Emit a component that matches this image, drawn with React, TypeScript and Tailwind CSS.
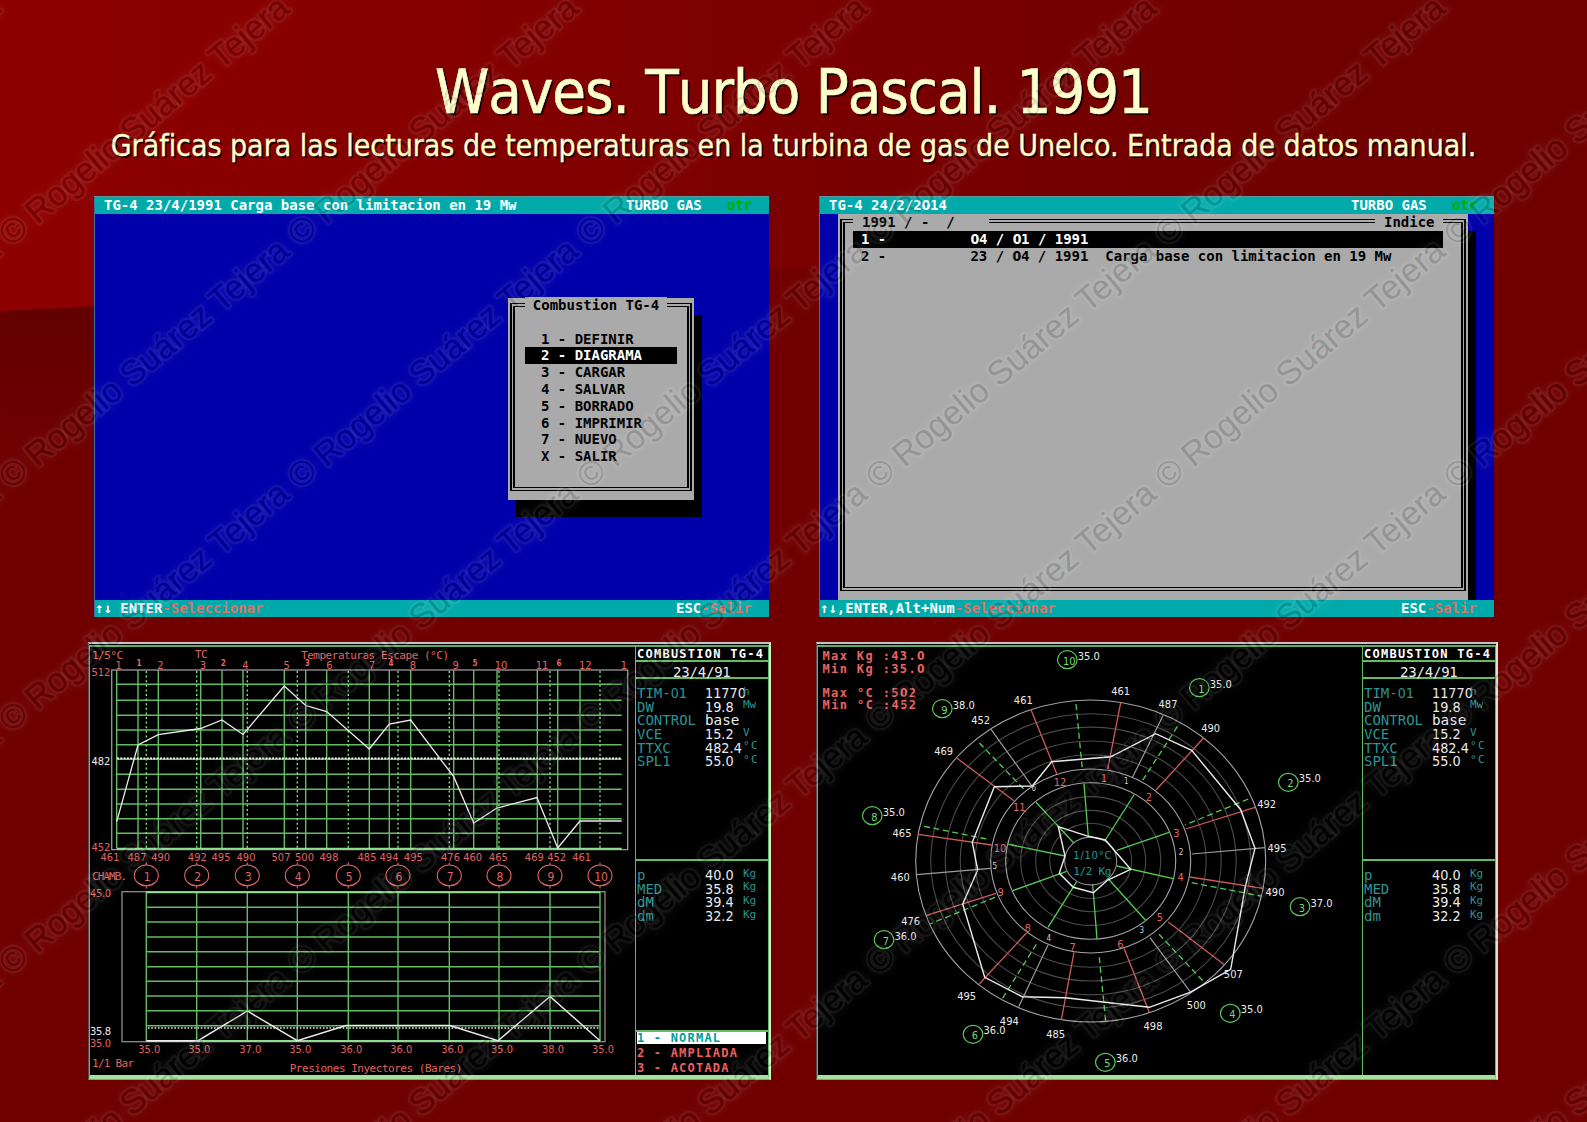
import React from "react";

const GREEN = "#62bd62";
const RED = "#e06464";
const WHITE = "#ececec";
const TEAL = "#2b9494";

/* Plain zeros: the monospace face has a marked zero, the condensed one has not. */
function Z({ t }: { t: string }) {
  return (
    <>
      {t.split(/(0)/).map((part, i) =>
        part === "0" ? (
          <span key={i} className="font-['DejaVu_Sans_Condensed'] tracking-[-0.02em]">
            0
          </span>
        ) : (
          part
        )
      )}
    </>
  );
}

/* ---------- text-mode screens (80 x 25 cells) ---------- */

function Bar({ children }: { children: React.ReactNode }) {
  return (
    <div className="flex h-[17px] shrink-0 whitespace-pre bg-[#00aaaa] leading-[17px] text-white">{children}</div>
  );
}

function TopBar({ title }: { title: string }) {
  return (
    <Bar>
      <span className="w-[531px] pl-[9px]">
        <Z t={title} />
      </span>
      <span className="w-[101px]">TURBO GAS</span>
      <span className="text-[#00aa00]">otr</span>
    </Bar>
  );
}

function BottomBar({ keys }: { keys: string }) {
  return (
    <Bar>
      <span className="w-[581px]">
        {keys}
        <span className="text-[#d87468]">-Seleccionar</span>
      </span>
      <span>
        ESC<span className="text-[#d87468]">-Salir</span>
      </span>
    </Bar>
  );
}

function TextScreen({ children }: { children: React.ReactNode }) {
  return (
    <section className="flex h-[421px] w-[675px] flex-col border-t border-l border-t-[#5c9a9a] border-l-[#3f6fa8] bg-[#0000aa] font-['DejaVu_Sans_Mono'] text-[14px] font-bold tracking-[-0.01px]">
      {children}
    </section>
  );
}

const MENU = [
  "1 - DEFINIR",
  "2 - DIAGRAMA",
  "3 - CARGAR",
  "4 - SALVAR",
  "5 - BORRADO",
  "6 - IMPRIMIR",
  "7 - NUEVO",
  "X - SALIR",
];

function MenuScreen() {
  return (
    <TextScreen>
      <TopBar title="TG-4 23/4/1991 Carga base con limitacion en 19 Mw" />
      <div className="flex flex-1 items-start pt-[84px] pl-[413px]">
        <div className="h-[202px] w-[186px] bg-[#aaaaaa] px-[2px] pt-[5px] pb-[9px] text-black shadow-[8px_17px_0_0_#000]">
          <div className="flex h-full flex-col border-x-[5px] border-y-[4px] border-double border-black">
            <div className="mt-[-10px] mr-[10px] self-center bg-[#aaaaaa] px-[8px] leading-[17px] whitespace-pre">
              Combustion TG-4
            </div>
            <ul className="mt-[16.6px] flex flex-col pl-[10px]">
              {MENU.map((m, i) => (
                <li
                  key={m}
                  className={
                    "h-[16.8px] w-[152px] pl-[16px] leading-[16.8px] whitespace-pre " + (i === 1 ? "bg-black text-white" : "")
                  }
                >
                  {m}
                </li>
              ))}
            </ul>
          </div>
        </div>
      </div>
      <BottomBar keys="↑↓ ENTER" />
    </TextScreen>
  );
}

function IndexScreen() {
  return (
    <TextScreen>
      <TopBar title="TG-4 24/2/2014" />
      <div className="flex flex-1 pl-[18px] text-black">
        <div className="w-[630px] bg-[#aaaaaa] px-[2px] pt-[5px] pb-[9px]">
          <div className="flex h-full flex-col border-x-[5px] border-y-[4px] border-double border-black">
            <div className="mt-[-9px] flex justify-between pr-[18px] pl-[8px] leading-[17px] whitespace-pre">
              <span className="w-[136px] bg-[#aaaaaa] pl-[9px]">1991 / -  /</span>
              <span className="w-[68px] bg-[#aaaaaa] pl-[9px]">Indice</span>
            </div>
            <div className="ml-[8px] h-[17px] w-[590px] bg-black pl-[8px] leading-[17px] whitespace-pre text-white">
              <Z t="1 -          04 / 01 / 1991" />
            </div>
            <div className="ml-[8px] pl-[8px] leading-[17px] whitespace-pre">
              <Z t="2 -          23 / 04 / 1991  Carga base con limitacion en 19 Mw" />
            </div>
          </div>
        </div>
        <div className="mt-[17px] w-[8px] bg-black" />
      </div>
      <BottomBar keys="↑↓,ENTER,Alt+Num" />
    </TextScreen>
  );
}

/* ---------- graphics-mode screens ---------- */

type LabelProps = { x: number; y: number; t: string; c?: string; s?: number; a?: "start" | "middle"; w?: number; mono?: boolean; bold?: boolean };

function L({ x, y, t, c = RED, s = 11, a = "middle", w, mono, bold }: LabelProps) {
  return (
    <text
      x={x}
      y={y}
      fill={c}
      fontSize={s}
      textAnchor={a}
      textLength={w}
      fontWeight={bold ? 700 : 400}
      fontFamily={mono ? "DejaVu Sans Mono" : "DejaVu Sans Condensed"}
      style={{ whiteSpace: "pre" }}
    >
      {t}
    </text>
  );
}

const READINGS = [
  ["TIM-01", "11770", "h"],
  ["DW", "19.8", "Mw"],
  ["CONTROL", "base", ""],
  ["VCE", "15.2", "V"],
  ["TTXC", "482.4", "°C"],
  ["SPL1", "55.0", "°C"],
];
const PRESSURES = [
  ["p", "40.0", "Kg"],
  ["MED", "35.8", "Kg"],
  ["dM", "39.4", "Kg"],
  ["dm", "32.2", "Kg"],
];

function Rows({ data }: { data: string[][] }) {
  return (
    <>
      {data.map(([k, v, u]) => (
        <div key={k} className="flex h-[13.7px] items-start pl-px leading-[13.7px] whitespace-pre">
          <span className="w-[68px] font-['DejaVu_Sans_Mono'] text-[14px] text-[#2b9494]">
            <Z t={k} />
          </span>
          <span
            className={
              "w-[38px] text-[14.3px] text-[#ececec] " +
              (v === "base" ? "font-['DejaVu_Sans_Mono']" : "font-['DejaVu_Sans_Condensed']")
            }
          >
            {v}
          </span>
          <span
            className={
              "relative -top-[2.5px] font-['DejaVu_Sans_Mono'] text-[11px] text-[#2b9494] " +
              (u === "°C" ? "tracking-[1.5px]" : "")
            }
          >
            {u}
          </span>
        </div>
      ))}
    </>
  );
}

function Side({ menu }: { menu?: boolean }) {
  return (
    <aside className="flex w-[133px] flex-col border-l border-[#62bd62]">
      <div className="h-[15px] border-b-2 border-[#62bd62] pl-px font-['DejaVu_Sans_Mono'] text-[12px] leading-[14px] font-bold tracking-[1.25px] whitespace-pre text-white">
        COMBUSTION TG-4
      </div>
      <div className="h-[17px] border-b-2 border-[#62bd62] pl-[37px] font-['DejaVu_Sans_Mono'] text-[14px] leading-[20px] tracking-[-0.2px] text-[#ececec]">
        23/4/91
      </div>
      <div className="h-[182px] border-b-2 border-[#62bd62] pt-[8px]">
        <Rows data={READINGS} />
      </div>
      <div className="flex-1 pt-[8px]">
        <Rows data={PRESSURES} />
      </div>
      {menu && (
        <div className="border-t-2 border-[#62bd62] pl-px font-['DejaVu_Sans_Mono'] text-[12px] font-bold tracking-[1.2px] whitespace-pre text-[#f06060]">
          <div className="mr-[2px] h-[12px] bg-white leading-[12.5px] text-[#009c9c]">1 - NORMAL</div>
          <div className="mt-[2px] h-[14.5px] leading-[14.5px]">2 - AMPLIADA</div>
          <div className="h-[14.5px] leading-[14.5px]">3 - ACOTADA</div>
        </div>
      )}
    </aside>
  );
}

const GRID_Y = [684.3, 700.3, 715.3, 730, 744.7, 759.2, 774.3, 789.3, 804, 818.7, 833.3];
const TC_X = [116.7, 138, 158.3, 200.7, 222, 243, 284.3, 305.7, 326.7, 369.3, 389.3, 410.7, 453.7, 473.7, 497, 537.3, 557.7, 580];
const CH_X = [146.3, 196.7, 247.3, 297.3, 348.3, 398, 449.3, 499, 550, 600];
const TC_TOP: [number, string][] = [
  [118.7, "1"], [160.5, "2"], [203, "3"], [245.5, "4"], [286.7, "5"], [329.5, "6"], [372, "7"],
  [413, "8"], [455.7, "9"], [501, "10"], [542, "11"], [585.3, "12"], [624, "1"],
];
const TC_SMALL: [number, string][] = [[139, "1"], [223.3, "2"], [307.3, "3"], [391, "4"], [475, "5"], [559, "6"]];
const TEMPS: [number, string][] = [
  [110, "461"], [137, "487"], [160.7, "490"], [197.3, "492"], [221, "495"], [246, "490"], [281, "507"], [304.5, "500"],
  [329, "498"], [367, "485"], [389, "494"], [413.3, "495"], [450.5, "476"], [472.7, "460"], [498.3, "465"],
  [534.3, "469"], [556.7, "452"], [581.7, "461"],
];
const BARS: [number, string][] = [
  [149.3, "35.0"], [199.3, "35.0"], [250.3, "37.0"], [300.3, "35.0"], [351.3, "36.0"], [401.3, "36.0"], [452.3, "36.0"],
  [502, "35.0"], [553, "38.0"], [603, "35.0"],
];
const BAR_Y = [907.3, 922, 937, 951.7, 966.7, 981.3, 996, 1010.7, 1025.7];

function LineChart() {
  return (
    <svg className="block h-[428px] w-[545px] shrink-0" viewBox="90 647 545 428" fill="none">
      <g stroke={GREEN} strokeWidth="1.4">
        {GRID_Y.map((y) => (
          <path key={y} d={`M116.7 ${y}H621.7`} />
        ))}
        {TC_X.map((x) => (
          <path key={x} d={`M${x} 670V848`} />
        ))}
        {CH_X.map((x) => (
          <path key={x} d={`M${x} 671V848`} stroke="#7fe07f" strokeDasharray="2 2.6" />
        ))}
      </g>
      <rect x="111.7" y="670" width="516" height="179.6" stroke="#9a9a9a" strokeWidth="1.3" />
      <path d="M116.7 848.8H621.7" stroke="#90dd90" strokeWidth="2" />
      <path d="M117 758.4H621.7" stroke="#f4fff4" strokeWidth="1.8" strokeDasharray="2 1.3" />
      <path
        d="M116.7 821.7 138 745 158.3 734.7 200.7 728.5 222 720 243 734.5 284.3 686 305.7 705.5 326.7 711.5 369.3 749 389.3 724 410.7 720 453.7 776.7 473.7 823 497 808 537 797.5 557.7 848 580 821H621.7"
        stroke={WHITE}
        strokeWidth="1.3"
      />
      <L x={92} y={658.7} t="1/5°C" a="start" w={31} mono />
      <L x={195} y={658} t="TC" a="start" w={12.5} mono />
      <L x={301} y={659} t="Temperaturas Escape (°C)" a="start" w={148} mono />
      {TC_TOP.map(([x, t]) => (
        <L key={x} x={x} y={668.9} t={t} />
      ))}
      {TC_SMALL.map(([x, t]) => (
        <L key={x} x={x} y={666.4} t={t} s={8} bold />
      ))}
      <L x={91.5} y={675.9} t="512" a="start" />
      <L x={91.5} y={765} t="482" a="start" c={WHITE} />
      <L x={91.5} y={851.2} t="452" a="start" />
      {TEMPS.map(([x, t]) => (
        <L key={x} x={x} y={861.2} t={t} />
      ))}
      <L x={92} y={880} t="CHAMB." a="start" w={35} mono />
      {CH_X.map((x, i) => (
        <g key={x}>
          <ellipse cx={x} cy={875.4} rx="12" ry="10.4" stroke={RED} strokeWidth="1.1" />
          <path d={`M${x} 862.5V865M${x} 885.8V888.5`} stroke={RED} strokeWidth="1.1" />
          <L x={x + 1} y={880.8} t={String(i + 1)} s={12} />
        </g>
      ))}
      <L x={90} y={897} t="45.0" a="start" w={21} />
      <L x={90} y={1035.2} t="35.8" a="start" w={21} c={WHITE} />
      <L x={90} y={1047.4} t="35.0" a="start" w={21} />
      <rect x="122" y="891.7" width="483" height="150" stroke="#8c8c8c" strokeWidth="1.3" />
      <g stroke={GREEN} strokeWidth="1.4">
        {BAR_Y.map((y) => (
          <path key={y} d={`M146.3 ${y}H600`} />
        ))}
        {CH_X.map((x) => (
          <path key={x} d={`M${x} 892V1041`} />
        ))}
        <path d="M146.3 892.3H600M146.3 1041H600" stroke="#90dd90" strokeWidth="2" />
      </g>
      <path d="M148 1028H600" stroke={WHITE} strokeWidth="1.3" strokeDasharray="1.6 1.7" />
      <path
        d="M146.3 1040.7H198L247.3 1011 297.3 1040.7 346 1025.5H450L498 1040.7 550 996.5 600 1040.7"
        stroke={WHITE}
        strokeWidth="1.4"
      />
      {BARS.map(([x, t]) => (
        <L key={x} x={x} y={1053.4} t={t} />
      ))}
      <L x={92} y={1067.2} t="1/1 Bar" a="start" w={42} mono />
      <L x={289.7} y={1072} t="Presiones Inyectores (Bares)" a="start" w={172.6} mono />
    </svg>
  );
}

const RINGS: [number, string][] = [
  [160, "#4a4a4a"], [145.5, "#4a4a4a"], [130.5, "#4a4a4a"], [115.5, "#4a4a4a"], [70, "#4a4a4a"], [55, "#4a4a4a"],
  [41, "#4a4a4a"], [175, "#a4a4a4"], [100, "#a4a4a4"], [85, "#a4a4a4"], [26, "#8c8c8c"],
];
const OUTER: [number, number, string][] = [
  [1023.3, 703.5, "461"], [1120.7, 694.5, "461"], [1168, 707.5, "487"], [1210.7, 732, "490"], [1266.7, 807.5, "492"],
  [1277, 851.5, "495"], [1275, 895.7, "490"], [1233.3, 978.3, "507"], [1196.3, 1009, "500"], [1153, 1029.7, "498"],
  [1055.7, 1038, "485"], [1009.3, 1025, "494"], [966.7, 1000.3, "495"], [910.7, 925.3, "476"], [900.3, 881, "460"],
  [902, 836.7, "465"], [943.7, 754.7, "469"], [980.7, 724.3, "452"],
];
const HOURS: [number, number, string][] = [
  [1060, 785.5, "12"], [1104, 782, "1"], [1149, 800.7, "2"], [1176.3, 836.7, "3"], [1180.7, 881, "4"], [1160, 921.3, "5"],
  [1120.3, 947.7, "6"], [1072.7, 950.7, "7"], [1027.7, 932.3, "8"], [1000.7, 896, "9"], [1000, 851.7, "10"], [1019.3, 811, "11"],
];
const SMALL: [number, number, string][] = [
  [1126.3, 784, "1"], [1181, 855.3, "2"], [1141.7, 933.3, "3"], [1048.7, 940.7, "4"], [994.7, 869.3, "5"], [1033.7, 791.3, "6"],
];
const CHAMBERS: [number, number, string, string][] = [
  [1199.3, 687.7, "1", "35.0"], [1288.3, 782.3, "2", "35.0"], [1300, 906.7, "3", "37.0"], [1230.3, 1013.3, "4", "35.0"],
  [1105.3, 1062.3, "5", "36.0"], [973, 1034.3, "6", "36.0"], [884, 939.7, "7", "36.0"], [872.3, 815.7, "8", "35.0"],
  [942.3, 708.7, "9", "38.0"], [1067.3, 659.7, "10", "35.0"],
];
const LIMITS: [number, string][] = [
  [660.3, "Max Kg :43.0"], [672.5, "Min Kg :35.0"], [696.7, "Max °C :502"], [708.9, "Min °C :452"],
];

function RadarChart() {
  return (
    <svg className="block h-[428px] w-[543px] shrink-0" viewBox="819 647 543 428" fill="none">
      {RINGS.map(([r, c]) => (
        <ellipse key={r} cx="1090.7" cy="861" rx={r} ry={r * 0.92} stroke={c} strokeWidth="1.1" />
      ))}
      <path
        stroke="#d05a5a"
        strokeWidth="1.3"
        d="M1031 709.7 1056.7 773.7M1120.7 702.7 1107.7 769M957 758.3 1014 800.7M918.3 834.3 991.7 845M1203.3 738.3 1156 790M1255 807.3 1185.7 829M1190 877 1262.7 888.3M1168.3 922 1224.3 964.7M1124 948.3 1149.3 1012.3M1074 952.3 1061.3 1020M1026.7 932.7 979 984.3M996 893.3 926.7 915.3"
      />
      <path
        stroke="#9c9c9c"
        strokeWidth="1.2"
        d="M991 729.3 1032.3 786.7M1163.3 715 1132.3 777.7M1265 847.7 1191.7 854M1150 937.7 1190.7 992.3M1048 945 1018.7 1006.7M916.7 874.7 990.7 868.3"
      />
      <path
        stroke="#55cc55"
        strokeWidth="1.3"
        strokeDasharray="6 3.6"
        d="M1076 704 1082.3 769M1177.3 726.7 1141.7 781.7M1248.3 799 1185 825M1191.7 882.7 1260.7 896M1159 934.3 1204.3 982.3M1099.3 957.3 1105.7 1021.7M1036.3 944.3 1001.7 999.7M995 897.3 930 924M924 826.3 990 839.7M979.3 743 1025 790.3"
      />
      <path
        stroke="#55cc55"
        strokeWidth="1.3"
        d="M1084 784 1088.3 836.3M1134 795 1105.3 840M1169 832.3 1116.7 850.3M1173.3 878.7 1116.7 866M1146 920.7 1107.7 878.3M1097 939 1092.7 885M1048 927.3 1076.7 881.7M1012.7 890.7 1066.7 871.3M1007.3 844 1065 856M1036 802.3 1074 843.3"
      />
      <g stroke={WHITE} strokeWidth="1.4">
        <path d="M1111 756.7 1155.7 733.7 1191.7 750.3 1240.7 809.7 1255 848.3 1245.3 886.7 1230.7 969.3 1190 992.3 1149.3 1007.3 1065.3 997.7 1022.3 996.7 984.7 977.3 962.7 904 977.7 870 972.3 842.3 994.3 786.7 1032.3 786 1051.7 761.7Z" />
        <path d="M1058.3 826.7 1088.3 836.3 1105.3 840 1130.7 869.3 1107.7 880 1093.3 892.7 1073.3 887.3 1059.3 873.3 1065 856Z" />
      </g>
      {OUTER.map(([x, y, t]) => (
        <L key={t + x} x={x} y={y} t={t} c={WHITE} />
      ))}
      {HOURS.map(([x, y, t]) => (
        <L key={t} x={x} y={y} t={t} />
      ))}
      {SMALL.map(([x, y, t]) => (
        <L key={t} x={x} y={y} t={t} s={8} c="#cfcfcf" />
      ))}
      {CHAMBERS.map(([x, y, n, v]) => (
        <g key={n}>
          <ellipse cx={x} cy={y} rx="9.8" ry="9" stroke="#5cc45c" strokeWidth="1.2" />
          <L x={x + 2} y={y + 5} t={n} c="#6fdc6f" />
          <L x={x + 10.5} y={y - 0.2} t={v} c={WHITE} a="start" />
        </g>
      ))}
      <L x={1073.3} y={858.5} t="1/10°C" a="start" w={38} c={TEAL} />
      <L x={1073.3} y={874.5} t="1/2 Kg" a="start" w={38} c={TEAL} mono />
      {LIMITS.map(([y, t]) => (
        <text
          key={t}
          x="822.5"
          y={y}
          fill="#ea6262"
          fontSize="12"
          fontWeight="700"
          textLength={t.length * 8.5}
          fontFamily="DejaVu Sans Mono"
          style={{ whiteSpace: "pre" }}
        >
          {t.split(/(0)/).map((part, i) =>
            part === "0" ? (
              <tspan key={i} fontFamily="DejaVu Sans Condensed">
                0
              </tspan>
            ) : (
              part
            )
          )}
        </text>
      ))}
    </svg>
  );
}

function GraphPanel({ children }: { children: React.ReactNode }) {
  return (
    <section className="h-[438px] border-t-2 border-r-2 border-b border-l border-t-[#c4c4c4] border-r-[#d6ead0] border-b-[#8f9a8c] border-l-[#5a4a4a] bg-black pt-px">
      <div className="flex h-[434px] border-t-2 border-r border-b-4 border-l border-t-[#5fae5f] border-r-[#62bd62] border-b-[#a2e29a] border-l-[#62bd62]">
        {children}
      </div>
    </section>
  );
}

/* ---------- slide backdrop and watermark ---------- */

function Backdrop() {
  return (
    <svg className="absolute inset-0 h-full w-full" viewBox="0 0 1587 1122" preserveAspectRatio="none">
      <defs>
        <linearGradient id="sky" x1="0" y1="0" x2="1" y2="0">
          <stop offset="0" stopColor="#8e0000" />
          <stop offset="0.25" stopColor="#860000" />
          <stop offset="0.55" stopColor="#790000" />
          <stop offset="0.8" stopColor="#710000" />
          <stop offset="1" stopColor="#700000" />
        </linearGradient>
        <radialGradient id="shade" gradientUnits="userSpaceOnUse" cx="0" cy="0" r="1" gradientTransform="translate(60 300) scale(420 150)">
          <stop offset="0" stopColor="#600000" />
          <stop offset="1" stopColor="#700000" />
        </radialGradient>
      </defs>
      <rect width="1587" height="1122" fill="url(#sky)" />
      <path d="M0 311C200 303 500 276 800 268S1400 262 1587 268V1122H0Z" fill="url(#shade)" />
    </svg>
  );
}

const MARKS = Array.from({ length: 42 }, (_, i) => [(i % 7) - 1, Math.floor(i / 7)]);
const OWNER = "© Rogelio Suárez Tejera";

function Watermark() {
  return (
    <svg className="pointer-events-none absolute inset-0 h-full w-full" viewBox="0 0 1587 1122" aria-hidden="true">
      <defs>
        <filter id="soft" x="-5%" y="-40%" width="110%" height="180%">
          <feGaussianBlur stdDeviation="3" />
        </filter>
        <mask id="around" maskUnits="userSpaceOnUse" x="-30" y="-60" width="440" height="100">
          <rect x="-30" y="-60" width="440" height="100" fill="#fff" />
          <text fill="#000" fontFamily="Liberation Sans" fontSize="33.8">
            {OWNER}
          </text>
        </mask>
      </defs>
      {MARKS.map(([c, r]) => (
        <g
          key={c + "," + r}
          transform={`translate(${11 + c * 289} ${247 + r * 243}) rotate(-40.1)`}
          fontFamily="Liberation Sans"
          fontSize="33.8"
        >
          <g mask="url(#around)" stroke="#fff" strokeLinejoin="round" fill="none">
            <text strokeOpacity="0.035" strokeWidth="8" filter="url(#soft)">
              {OWNER}
            </text>
            <text strokeOpacity="0.05" strokeWidth="5">
              {OWNER}
            </text>
          </g>
          <text fill="#000" fillOpacity="0.14">
            {OWNER}
          </text>
        </g>
      ))}
    </svg>
  );
}

export default function App() {
  return (
    <main className="relative h-[1122px] w-[1587px] overflow-hidden bg-[#700000]">
      <Backdrop />
      <div className="relative flex flex-col">
        <header className="flex h-[196px] flex-col items-center font-['DejaVu_Sans_Condensed'] whitespace-nowrap text-[#ffffcc]">
          <h1 className="mt-[56px] text-[61px] leading-[71px] tracking-[-1.05px] [-webkit-text-stroke:0.6px_#ffffcc] [font-kerning:none] [text-shadow:2px_2px_0_#1a0000]">
            Waves. Turbo Pascal. 1991
          </h1>
          <p className="mt-px text-[30px] leading-[35px] tracking-[-0.03px] [-webkit-text-stroke:0.3px_#ffffcc] [text-shadow:1.5px_1.5px_0_#1a0000]">
            Gráficas para las lecturas de temperaturas en la turbina de gas de Unelco. Entrada de datos manual.
          </p>
        </header>
        <div className="flex gap-[50px] pl-[94px]">
          <MenuScreen />
          <IndexScreen />
        </div>
        <div className="mt-[25px] flex gap-[45px] pl-[88px]">
          <GraphPanel>
            <LineChart />
            <Side menu />
          </GraphPanel>
          <GraphPanel>
            <div className="w-px" />
            <RadarChart />
            <Side />
          </GraphPanel>
        </div>
      </div>
      <Watermark />
    </main>
  );
}
